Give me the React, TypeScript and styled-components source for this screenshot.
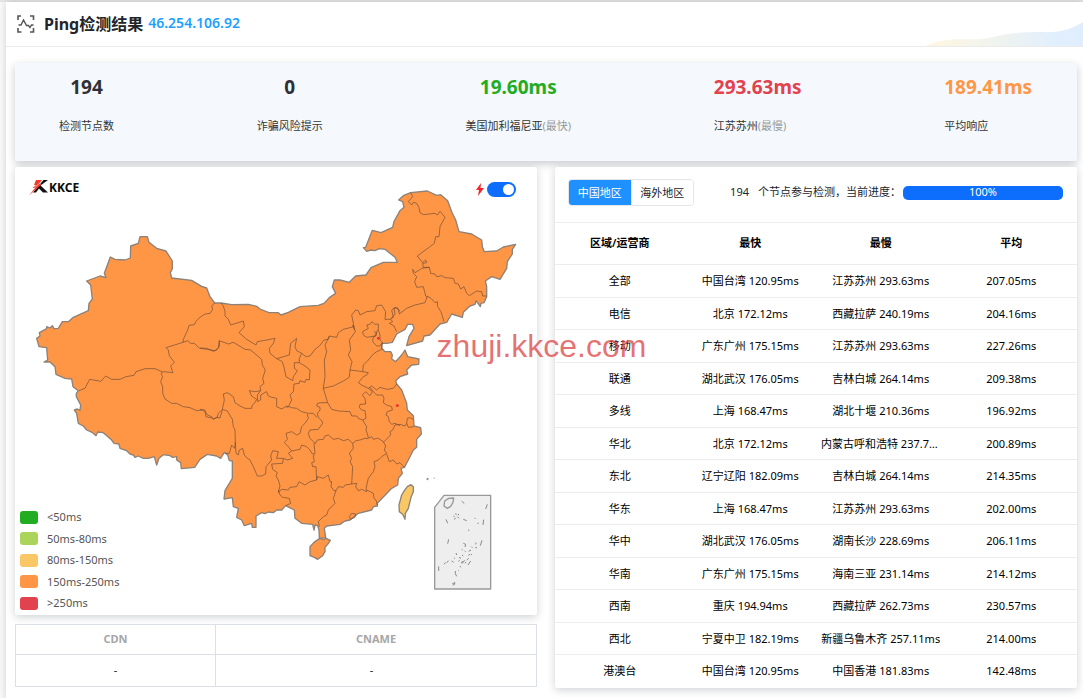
import React, { useState } from "react";
import styled, { createGlobalStyle } from "styled-components";

const GlobalStyle = createGlobalStyle`
  *, *::before, *::after { box-sizing: border-box; }
  body {
    margin: 0;
    background: #fff;
    color: #212529;
    font-family: "Noto Sans", "Noto Sans CJK SC", sans-serif;
    font-size: 11px;
    line-height: 16px;
  }
`;

const Page = styled.div`
  padding: 2px 0 0 6px;
  overflow: hidden;
  background: linear-gradient(#e6e6e6 0 2px, #fafafa 2px);
`;

const Card = styled.main`
  background: #fff;
  box-shadow: 0 0 8px rgba(0, 0, 0, 0.18);
  padding-bottom: 11px;
`;

const Header = styled.header`
  display: flex;
  align-items: center;
  height: 45px;
  padding-left: 10px;
  border-bottom: 1px solid #ebebeb;
`;

const Title = styled.h1`
  margin: 0 5px 0 8px;
  font-size: 16px;
  line-height: 24px;
  font-weight: 700;
`;

const Address = styled.span`
  color: #1e9fff;
  font-size: 14px;
  line-height: 18px;
  padding-bottom: 2px;
  font-weight: 600;
`;

const Swoosh = styled.svg`
  align-self: flex-end;
  margin-left: auto;
`;

const Content = styled.div`
  padding: 16px 6px 0 9px;
  display: flex;
  flex-direction: column;
  gap: 6px;
`;

const Stats = styled.section`
  display: flex;
  justify-content: space-between;
  height: 98px;
  padding: 10px 45px 0 44px;
  background: #f5f9fd;
  border-radius: 2px;
  box-shadow: 0 3px 8px rgba(0, 20, 30, 0.22);
`;

const Stat = styled.div<{ $left?: boolean }>`
  display: flex;
  flex-direction: column;
  align-items: ${(p) => (p.$left ? "flex-start" : "center")};
  gap: 16px;
`;

const StatValue = styled.strong<{ $color?: string }>`
  font-size: 19px;
  line-height: 28px;
  font-weight: 700;
  color: ${(p) => p.$color ?? "#2f3036"};
`;

const StatLabel = styled.span`
  line-height: 18px;
  color: #333;
`;

const Muted = styled.span`
  color: #999;
`;

const Columns = styled.div`
  display: grid;
  grid-template-columns: minmax(0, 1fr) minmax(0, 1fr);
  gap: 18px;
  align-items: start;
`;

const LeftColumn = styled.div`
  display: flex;
  flex-direction: column;
  gap: 9px;
`;

const Panel = styled.section`
  background: #fff;
  border-radius: 2px;
  box-shadow: 0 2px 8px rgba(0, 20, 30, 0.2);
`;

const MapPanel = styled(Panel)`
  display: grid;
  > * { grid-area: 1 / 1; }
`;

const MapSvg = styled.svg`
  display: block;
  width: 100%;
  height: auto;
`;

const MapBar = styled.div`
  align-self: start;
  display: flex;
  justify-content: space-between;
  align-items: flex-start;
  padding: 12px 21px 0 14px;
  z-index: 1;
`;

const Logo = styled.div`
  display: flex;
  align-items: center;
  font-size: 12px;
  font-weight: 700;
  color: #0b0b0b;
`;

const SwitchLabel = styled.label`
  display: flex;
  align-items: center;
  gap: 3px;
  padding-top: 3px;
`;

const Switch = styled.input`
  appearance: none;
  width: 29px;
  height: 15px;
  margin: 0;
  border-radius: 8px;
  background: #adb5bd;
  display: flex;
  align-items: center;
  padding: 0 2px;
  &::before {
    content: "";
    width: 11px;
    height: 11px;
    border-radius: 50%;
    background: #fff;
  }
  &:checked {
    background: #0d6efd;
    justify-content: flex-end;
  }
`;

const Legend = styled.ul`
  align-self: end;
  justify-self: start;
  list-style: none;
  margin: 0;
  padding: 0 0 4px 5px;
  height: 106px;
  display: flex;
  flex-direction: column;
  justify-content: space-between;
`;

const LegendItem = styled.li<{ $color: string }>`
  display: flex;
  align-items: center;
  gap: 9px;
  color: #555;
  &::before {
    content: "";
    width: 18px;
    height: 13px;
    border-radius: 3px;
    background: ${(p) => p.$color};
  }
`;

const RecordTable = styled.table`
  width: 100%;
  table-layout: fixed;
  border-collapse: collapse;
  text-align: center;
  th, td { border: 1px solid #dcdfe6; padding: 0 0 2px; }
  th { height: 30px; color: #a6a6a6; font-weight: 700; }
  td { height: 32px; }
  td:last-child { padding-right: 9px; }
  th:first-child { width: 200px; }
`;

const Toolbar = styled.div`
  display: flex;
  align-items: center;
  height: 55px;
  padding: 0 14px 4px 13px;
`;

const Tabs = styled.div`
  display: flex;
  width: 126px;
  height: 27px;
  border: 1px solid #e3e5e8;
  border-radius: 4px;
  overflow: hidden;
`;

const Tab = styled.button<{ $active: boolean }>`
  flex: 1;
  padding: 0;
  border: 0;
  font: inherit;
  color: ${(p) => (p.$active ? "#fff" : "#212529")};
  background: ${(p) => (p.$active ? "#1e90ff" : "#fff")};
  & + & { border-left: 1px solid #e3e5e8; }
`;

const Status = styled.span`
  display: flex;
  gap: 9px;
  margin-left: auto;
  padding-bottom: 2px;
  white-space: nowrap;
`;

const Progress = styled.div`
  width: 160px;
  height: 14px;
  margin-left: 2px;
  border-radius: 5px;
  background: #0d6efd;
  color: #fff;
  text-align: center;
  line-height: 12px;
`;

const DataTable = styled.table`
  width: 100%;
  table-layout: fixed;
  border-collapse: collapse;
  text-align: center;
  color: #000;
  th, td {
    padding: 0 6px 0 5px;
    border-top: 1px solid #ededed;
    overflow: hidden;
    text-overflow: ellipsis;
    white-space: nowrap;
  }
  th { height: 42px; padding-bottom: 1px; font-weight: 600; }
  td { height: 33px; }
  tr:nth-child(even) td { height: 32px; }
`;

const Watermark = styled.div`
  position: absolute;
  inset: 0;
  display: flex;
  align-items: center;
  justify-content: center;
  height: 692px;
  pointer-events: none;
  z-index: 2;
  font-family: "Liberation Sans", Arial, sans-serif;
  font-size: 32px;
  line-height: 40px;
  color: rgba(220, 60, 60, 0.72);
`;

const LAND =
  "50,475 60,468 58,458 80,446 80,440 90,444 97,437 102,446 115,445 127,425 145,425 160,412 205,392 207,370 217,357 212,315 200,303 240,288 258,293 253,280 271,231 285,238 315,240 331,234 332,198 355,190 360,170 382,170 387,187 410,205 438,213 457,243 457,266 451,278 455,294 515,301 545,319 560,324 570,350 584,369 603,369 635,374 685,373 710,379 720,387 747,398 775,398 783,405 805,397 840,380 895,376 912,370 928,353 947,340 937,320 943,300 960,300 988,307 1007,288 1038,285 1053,263 1090,247 1132,247 1125,232 1095,208 1078,206 1065,212 1052,210 1040,214 1030,203 1037,202 1057,151 1083,158 1118,142 1122,125 1140,92 1152,82 1148,65 1136,60 1150,47 1172,38 1222,33 1250,46 1262,44 1283,62 1295,95 1307,120 1317,155 1355,162 1385,180 1387,200 1393,215 1430,213 1450,201 1487,193 1477,208 1477,222 1462,245 1460,265 1440,298 1415,290 1396,303 1400,320 1400,350 1392,368 1383,370 1381,380 1368,362 1365,373 1350,378 1330,397 1327,412 1295,402 1280,427 1260,432 1230,465 1212,468 1208,483 1160,497 1167,470 1182,445 1178,433 1163,433 1155,448 1130,462 1117,487 1100,490 1085,490 1085,505 1095,515 1112,515 1117,525 1115,537 1127,545 1145,525 1155,510 1163,530 1197,537 1196,553 1175,555 1160,570 1163,582 1140,590 1127,602 1130,612 1145,630 1160,670 1162,690 1180,707 1182,738 1202,743 1204,762 1190,778 1190,802 1180,810 1165,840 1153,862 1143,865 1147,880 1135,895 1133,915 1115,925 1072,970 1072,978 1060,980 1055,990 1015,1000 990,1020 975,1023 960,1033 920,1038 913,1045 917,1073 898,1075 897,1050 893,1037 885,1035 882,1050 878,1033 845,1030 825,1015 823,990 797,977 785,990 770,990 760,998 745,996 735,1001 725,998 708,1008 708,1042 697,1042 695,1030 673,1037 665,1020 650,1012 655,985 640,980 637,953 612,957 615,932 637,895 637,843 628,842 623,825 613,817 602,835 590,828 562,823 540,838 524,862 484,866 482,848 470,840 470,830 458,832 450,827 430,824 417,835 410,855 403,830 385,835 370,835 355,828 345,832 340,825 330,822 320,812 300,805 297,792 282,790 275,780 250,758 233,756 228,767 218,758 200,750 190,738 175,730 170,700 163,690 172,687 180,691 182,675 169,650 169,640 175,632 159,620 155,597 135,595 108,583 105,560 90,546 72,546 83,540 80,503 57,500";

/* Province borders, grouped by the part of the country they belong to. */
const WEST = [
  "584,249 575,258 578,268 570,280 555,282 540,292 527,305 523,314 507,316 503,330 490,358 489,367 438,383 445,390 448,407 463,427 452,438 459,458 430,455 423,460",
  "177,512 195,505 209,478 243,484 257,468 275,478 300,478 318,470 342,466 348,455 375,446 405,446 428,456",
  "489,367 503,362 512,370 523,370 538,384 560,385 580,394 590,390 598,380",
  "423,460 428,470 422,485 428,500 428,520 435,537 455,550 470,550 490,560 510,563 530,572 548,570 555,575 558,590 575,594 580,598 590,592 600,594 607,570",
];

const CENTRAL = [
  "58,200 58,182 85,192 100,187 135,208 152,210 185,238 187,255 196,270 188,295 192,310 180,320 182,332 165,335 148,332 155,348 170,358 165,368 157,375 155,385 135,385 120,378 105,368 100,350 82,338 70,342 73,360 67,388 55,400 52,412 40,417 35,410 22,405 14,390 0,388",
  "0,205 22,208 45,212 55,203 58,182",
  "182,332 172,345 173,365 182,360 182,345 200,335 205,348 215,352 230,355 230,380 245,387 260,378 275,383 290,385 305,395 325,400 340,400 350,412",
  "67,388 82,393 97,418 100,440 105,450 106,485 104,505 95,495 88,520 75,520",
  "106,485 108,520 115,525 118,510 128,505 133,525 142,535 150,540 160,560 172,588 185,588 197,582 198,560 215,540 212,528 218,512 235,515 230,535 250,535 262,540 278,535 265,520 275,513",
  "63,69 70,78 75,95 75,108 85,118 92,135 108,130 130,123 133,140 117,158 140,178 168,195 172,185 200,180 225,175 220,190 208,205 210,220 230,236",
  "230,236 268,225 272,190 290,175 285,200 290,212 305,220 298,235 298,248 283,248 283,265 292,272 280,290 278,302 258,290 252,262 247,245 230,236",
  "298,248 315,258 330,270 328,300 318,298 315,307 300,302 298,310 282,312 280,335 270,345 275,360 265,380 258,382",
  "305,220 318,230 330,228 345,208 358,198 372,180 385,178 388,168",
  "388,168 380,185 375,195 380,215 373,240 375,290 370,325 383,368",
  "388,168 410,172 415,158 430,148 462,140 458,135 463,150",
  "462,140 466,155 448,180 452,210 445,225 456,245 450,270 448,292 430,303 400,318 370,325",
  "462,140 455,105 467,90 475,92 480,105 500,95 525,92 530,77 545,75 557,95 555,118 572,118 585,102 582,85 592,83 600,95",
  "572,118 578,125 568,130 582,138 590,155",
  "488,155 505,145 500,135 510,133 516,125 525,133 535,132 535,147 530,155 525,168 500,172 490,165 488,155",
  "522,155 530,158 528,168 520,170 M520 170 L518 185 530,198 540,198 545,190",
  "535,150 540,165 540,180 548,188 545,205 550,210",
  "545,208 530,215 520,222 505,240 490,255 488,275",
  "450,270 475,273 488,275 505,278 500,285 490,290 475,308 485,315 505,325",
  "505,325 515,318 530,330 540,322 560,328 580,325 590,312",
  "505,325 517,335 510,347 497,335 487,345 495,355 497,372 480,373 478,382 485,390 495,392 498,415 488,420",
  "383,368 395,388 415,393 450,395 455,408 470,408 475,415 488,420",
  "510,322 520,335 530,345 548,345 552,355 550,368 560,375 575,380 577,390 562,395 558,405 565,410 568,425 575,433",
  "575,433 585,430 600,437",
  "488,420 500,440 498,450 505,472",
  "505,475 495,475 480,480 468,482 458,490 445,478 430,482 415,475 400,478 385,465 375,468 370,478 352,480 345,492",
  "383,368 365,368 352,370 350,378 360,382 360,390 352,400 355,412 365,422 368,430 355,448 330,450 325,460 330,475 345,490",
  "322,402 325,415 315,430 305,440 300,460 290,465 275,455 258,460 262,478 253,488 265,500 275,513 300,508 305,495 320,500 330,510 335,520 342,522",
  "250,535 248,550 215,552 218,568 232,578 228,588 235,600 240,618 235,637",
  "235,637 245,628 265,630 270,622 290,620 297,605 315,615 330,605 350,600",
  "342,490 345,520 340,528 343,545 335,548 338,560 348,560 350,600",
  "235,630 240,645 248,652 268,655 272,670 257,677",
  "350,600 352,590 370,595 385,585 390,605 395,605 393,620 402,632 408,632",
  "408,632 415,620 430,622 435,615 455,612",
  "458,490 460,505 448,520 455,535 450,545 458,560 455,612",
  "455,612 470,610 467,620 475,632 485,628 500,635 498,625",
  "498,625 505,595 520,575 525,560 522,545 535,540 545,530 560,520",
  "560,520 553,510 557,498 550,485 535,475 530,475 520,478 515,470 503,475",
  "550,487 572,465 570,455 578,450 585,435",
  "500,630 520,640 522,655 528,660 532,675",
  "408,632 400,655 405,670 385,690 380,705 370,710 355,725 358,740",
];

const NORTHEAST = [
  "212,38 218,50 205,65 215,75 220,67 230,70 237,83 240,98 250,104 285,100 292,105 300,94 315,112 300,140 297,170 287,170 283,190 270,200 232,228 248,248 257,240 260,248 248,250 250,262",
  "268,262 245,265 238,270 225,278 218,268 220,280 230,290 224,305 230,322 250,320 257,348 262,352",
  "250,262 268,262 272,280 285,282 290,290 305,287 315,293 340,295 345,310 355,312 362,327 372,320 380,340 388,347 410,333 425,335 428,348 440,348",
  "153,415 160,412 155,390 165,382 175,388 178,402 200,385 225,375 255,368 262,348",
  "262,348 275,357 285,368 292,365 293,380 303,395 312,425",
];

const SOUTHEAST = [
  "260,222 268,245 280,240 290,252 300,248 313,262",
  "285,135 300,133 315,138 320,130 322,115 330,113 340,118",
  "320,130 325,142 342,140",
  "148,410 155,400 167,402 165,412 152,418 148,410",
];

const ISLETS =
  "M562 373l-5 14M438 418l5 12M551 419l-2 16M446 478l-3 13M546 481l-5 16M416 559v14M445 542l-4 6M437 547l-5 6M512 543l-8 12M494 541l-8 10M466 573v8l4 8M457 611l8-3-2 6-5 1M379 298l5-4v5h-3M401 294l3 1M485 363l8 8M460 408l4 2M467 400l2 5M475 402l1 4M462 418l5-3M472 410l5 5M490 418l10 4M524 415h3M532 431l4-2M504 450l4 1M490 490l7 3-2 8M514 500l3 3M528 488l-1 5M526 502l5 2M485 508l3 2M494 513l3 2M506 514l7-4M505 526l5-3M513 522l3 3M486 525l4 3M468 519l2 6M477 532l6 3M463 533l1 3M455 543l6 4M475 544l4-3M483 548l7-4M495 550l3-4M500 540l6-5M480 558l2 4M474 570l2 2";

const toPath = (points: string) => "M" + points;

function Borders({ x, y, lines }: { x: number; y: number; lines: string[] }) {
  return (
    <g transform={`translate(${x} ${y})`} fill="none" stroke="#6b4a32" strokeOpacity="0.65" strokeWidth="3" strokeLinejoin="round">
      {lines.map((line) => (
        <path key={line} d={toPath(line)} />
      ))}
    </g>
  );
}

function ChinaMap() {
  return (
    <MapSvg viewBox="-15 -39 1566 1344" role="img" aria-label="中国地图">
      <polygon points={LAND} fill="#ff9646" stroke="#8d8178" strokeWidth="4" strokeLinejoin="round" />
      <Borders x={0} y={120} lines={WEST} />
      <Borders x={540} y={300} lines={CENTRAL} />
      <Borders x={960} y={0} lines={NORTHEAST} />
      <Borders x={840} y={600} lines={SOUTHEAST} />
      <g fill="#f5222d">
        <circle cx="1075" cy="475" r="4" />
        <circle cx="1132" cy="677" r="4" />
      </g>
      <g transform="translate(840 600)" stroke="#8d8178" strokeWidth="4" strokeLinejoin="round">
        <polygon fill="#ff9646" points="55,478 62,475 70,479 78,475 91,481 83,493 75,502 75,515 68,527 53,538 43,532 30,527 30,500 42,487" />
        <polygon fill="#f9c766" points="333,314 340,320 340,335 333,352 325,385 316,400 315,418 308,403 298,395 297,375 305,345 313,332 322,320" />
        <polygon fill="#eee" stroke="#999" points="432,346 572,346 572,627 404,627 404,382" />
        <path fill="none" stroke="#999" d="M432 378l2-15 12-8 15-1-2 13-7 12-10 6z" />
        <path fill="none" stroke="#888" strokeWidth="3" d={ISLETS} />
      </g>
    </MapSvg>
  );
}

const LEGEND = [
  ["#22ac22", "<50ms"],
  ["#acd45a", "50ms-80ms"],
  ["#f9c766", "80ms-150ms"],
  ["#ff9646", "150ms-250ms"],
  ["#e2414e", ">250ms"],
];

const ROWS = [
  ["全部", "中国台湾 120.95ms", "江苏苏州 293.63ms", "207.05ms"],
  ["电信", "北京 172.12ms", "西藏拉萨 240.19ms", "204.16ms"],
  ["移动", "广东广州 175.15ms", "江苏苏州 293.63ms", "227.26ms"],
  ["联通", "湖北武汉 176.05ms", "吉林白城 264.14ms", "209.38ms"],
  ["多线", "上海 168.47ms", "湖北十堰 210.36ms", "196.92ms"],
  ["华北", "北京 172.12ms", "内蒙古呼和浩特 237.79ms", "200.89ms"],
  ["东北", "辽宁辽阳 182.09ms", "吉林白城 264.14ms", "214.35ms"],
  ["华东", "上海 168.47ms", "江苏苏州 293.63ms", "202.00ms"],
  ["华中", "湖北武汉 176.05ms", "湖南长沙 228.69ms", "206.11ms"],
  ["华南", "广东广州 175.15ms", "海南三亚 231.14ms", "214.12ms"],
  ["西南", "重庆 194.94ms", "西藏拉萨 262.73ms", "230.57ms"],
  ["西北", "宁夏中卫 182.19ms", "新疆乌鲁木齐 257.11ms", "214.00ms"],
  ["港澳台", "中国台湾 120.95ms", "中国香港 181.83ms", "142.48ms"],
];

const REGIONS = ["中国地区", "海外地区"];

export default function App() {
  const [region, setRegion] = useState(0);

  return (
    <>
      <GlobalStyle />
      <Page>
        <Card>
          <Header>
            <svg width="20" height="20" viewBox="0 0 20 20" fill="none" stroke="#555" strokeWidth="1.6" aria-hidden="true">
              <path d="M5 2H2v4M14 2h3.500v4M2 14v4h3.500M17.500 14v4H14" />
              <path d="M2.500 11H5l2.500-5 3 5.500h2l1.500 2 1.500-2.500h2" strokeWidth="1.400" />
            </svg>
            <Title>Ping检测结果</Title>
            <Address>46.254.106.92</Address>
            <Swoosh width="160" height="26" viewBox="0 0 160 26" aria-hidden="true">
              <defs>
                <linearGradient id="swoosh" x1="0" x2="1">
                  <stop offset="0" stopColor="#fff6df" />
                  <stop offset="0.45" stopColor="#f0f4ef" />
                  <stop offset="0.8" stopColor="#e2effd" />
                  <stop offset="1" stopColor="#dfeefe" />
                </linearGradient>
              </defs>
              <path d="M2 26C30 15 42 22 66 18C88 13 98 12 116 12C140 13 148 9 160 2V26Z" fill="url(#swoosh)" />
            </Swoosh>
          </Header>

          <Content>
            <Stats>
              <Stat>
                <StatValue>194</StatValue>
                <StatLabel>检测节点数</StatLabel>
              </Stat>
              <Stat>
                <StatValue>0</StatValue>
                <StatLabel>诈骗风险提示</StatLabel>
              </Stat>
              <Stat>
                <StatValue $color="#22ac22">19.60ms</StatValue>
                <StatLabel>美国加利福尼亚<Muted>(最快)</Muted></StatLabel>
              </Stat>
              <Stat $left>
                <StatValue $color="#e2414e">293.63ms</StatValue>
                <StatLabel>江苏苏州<Muted>(最慢)</Muted></StatLabel>
              </Stat>
              <Stat $left>
                <StatValue $color="#ff9646">189.41ms</StatValue>
                <StatLabel>平均响应</StatLabel>
              </Stat>
            </Stats>

            <Columns>
              <LeftColumn>
                <MapPanel>
                  <ChinaMap />
                  <MapBar>
                    <Logo>
                      <svg width="20" height="17" viewBox="0 0 20 17" aria-hidden="true">
                        <path d="M19 1l-7.500 5.500L19 13.500h-5l-4-4-3 4H4L14.500 1z" fill="#111" />
                        <path d="M7 1h6l-2.500 4H13L0 16.500 6 9H3.500l3.500-3H5z" fill="#f03c28" />
                        <path d="M14 1L3 11" stroke="#fff" strokeWidth="0.500" />
                      </svg>
                      KKCE
                    </Logo>
                    <SwitchLabel>
                      <svg width="8" height="13" viewBox="0 0 8 13" role="img" aria-label="快速模式">
                        <path d="M5 0L0 7h3L2 13l6-8H4.500z" fill="#f5222d" />
                      </svg>
                      <Switch type="checkbox" defaultChecked />
                    </SwitchLabel>
                  </MapBar>
                  <Legend>
                    {LEGEND.map(([color, label]) => (
                      <LegendItem key={label} $color={color}>{label}</LegendItem>
                    ))}
                  </Legend>
                </MapPanel>

                <RecordTable>
                  <thead>
                    <tr>
                      <th scope="col">CDN</th>
                      <th scope="col">CNAME</th>
                    </tr>
                  </thead>
                  <tbody>
                    <tr>
                      <td>-</td>
                      <td>-</td>
                    </tr>
                  </tbody>
                </RecordTable>
              </LeftColumn>

              <Panel>
                <Toolbar>
                  <Tabs>
                    {REGIONS.map((name, i) => (
                      <Tab key={name} type="button" $active={region === i} onClick={() => setRegion(i)}>
                        {name}
                      </Tab>
                    ))}
                  </Tabs>
                  <Status>
                    <span>194</span>
                    <span>个节点参与检测，当前进度：</span>
                  </Status>
                  <Progress role="progressbar" aria-valuenow={100} aria-label="检测进度">100%</Progress>
                </Toolbar>
                <DataTable>
                  <thead>
                    <tr>
                      <th scope="col">区域/运营商</th>
                      <th scope="col">最快</th>
                      <th scope="col">最慢</th>
                      <th scope="col">平均</th>
                    </tr>
                  </thead>
                  <tbody>
                    {ROWS.map((row) => (
                      <tr key={row[0]}>
                        {row.map((cell, i) => (
                          <td key={i}>{cell}</td>
                        ))}
                      </tr>
                    ))}
                  </tbody>
                </DataTable>
              </Panel>
            </Columns>
          </Content>
        </Card>
      </Page>
      <Watermark>zhuji.kkce.com</Watermark>
    </>
  );
}
